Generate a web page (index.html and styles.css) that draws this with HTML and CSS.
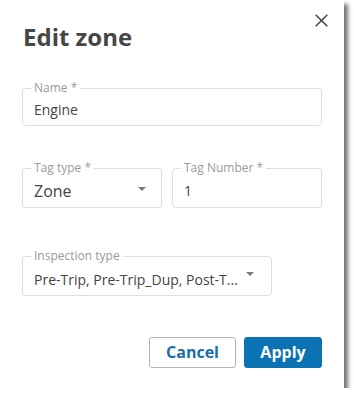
FILE: index.html
```html
<!DOCTYPE html>
<html lang="en">
<head>
<meta charset="utf-8">
<title>Edit zone</title>
<link rel="stylesheet" href="styles.css">
</head>
<body>
<div class="dialog">
  <div class="header">
    <h1 class="title">Edit zone</h1>
    <button class="close" aria-label="Close">
      <svg width="13" height="13" viewBox="0 0 13 13"><path d="M0.7 0.7L12.3 12.3M12.3 0.7L0.7 12.3" stroke="#444" stroke-width="1.5" fill="none"/></svg>
    </button>
  </div>

  <fieldset class="field field-name">
    <legend>Name *</legend>
    <div class="value">Engine</div>
  </fieldset>

  <div class="row">
    <fieldset class="field field-type">
      <legend>Tag type *</legend>
      <div class="select">
        <span class="value value-lg">Zone</span>
        <span class="arrow"></span>
      </div>
    </fieldset>
    <fieldset class="field field-number">
      <legend>Tag Number *</legend>
      <div class="value">1</div>
    </fieldset>
  </div>

  <fieldset class="field field-insp">
    <legend>Inspection type</legend>
    <div class="select">
      <span class="value">Pre-Trip, Pre-Trip_Dup, Post-T...</span>
      <span class="arrow"></span>
    </div>
  </fieldset>

  <div class="actions">
    <button class="btn btn-cancel">Cancel</button>
    <button class="btn btn-apply">Apply</button>
  </div>
</div>
</body>
</html>
```

FILE: styles.css
```css
html, body {
  margin: 0;
  padding: 0;
  background: #ffffff;
}

body {
  font-family: "Open Sans", "Noto Sans", sans-serif;
  color: #444444;
}

.dialog {
  width: 344px;
  height: 388px;
  box-sizing: border-box;
  padding: 14px 22px 0 22px;
  background: #ffffff;
  box-shadow: 4px 4px 4px rgba(0, 0, 0, 0.55);
  display: flex;
  flex-direction: column;
}

.header {
  display: flex;
  justify-content: space-between;
  align-items: flex-start;
}

.title {
  margin: 7px 0 0 1px;
  font-size: 24px;
  line-height: 32px;
  font-weight: 700;
  color: #464646;
}

.close {
  border: 0;
  background: transparent;
  padding: 0;
  margin: 0 -6px 0 0;
  width: 13px;
  height: 13px;
  display: flex;
}

.field {
  margin: 0;
  min-width: 0;
  border: 1px solid #dedede;
  border-radius: 4px;
  padding: 6px 11px 5px;
}

.field legend {
  margin-left: -3px;
  padding: 0 3px;
  font-size: 12px;
  line-height: 12px;
  color: #9a9a9a;
}

.value {
  font-size: 14px;
  line-height: 20px;
  color: #444444;
  white-space: nowrap;
  overflow: hidden;
}

.value-lg {
  font-size: 16px;
  line-height: 22px;
}

.field-name {
  margin-top: 29px;
}

.row {
  display: flex;
  gap: 10px;
  margin-top: 36px;
}

.field-type {
  width: 140px;
  box-sizing: border-box;
  padding: 6px 15px 5px 11px;
}

.field-number {
  flex: 1;
  padding: 7px 11px 5px;
}

.select {
  display: flex;
  align-items: center;
  justify-content: space-between;
}

.arrow {
  width: 0;
  height: 0;
  border-left: 4.5px solid transparent;
  border-right: 4.5px solid transparent;
  border-top: 4px solid #777777;
  margin-top: -3px;
}

.field-type .arrow {
  margin-top: -4px;
}

.field-insp {
  width: 250px;
  box-sizing: border-box;
  margin-top: 42px;
  padding: 8px 17px 5px 11px;
}

.field-insp .arrow {
  margin-top: -12px;
}

.actions {
  display: flex;
  justify-content: flex-end;
  gap: 8px;
  margin-top: 41px;
}

.btn {
  font-family: "Open Sans", "Noto Sans", sans-serif;
  font-size: 16px;
  font-weight: 700;
  height: 31px;
  border-radius: 3px;
  padding: 0;
  line-height: 29px;
}

.btn-cancel {
  width: 87px;
  background: #ffffff;
  border: 1px solid #b4b4b4;
  color: #176fa9;
}

.btn-apply {
  width: 78px;
  background: #0b72b3;
  border: 1px solid #0b72b3;
  color: #ffffff;
}
```
